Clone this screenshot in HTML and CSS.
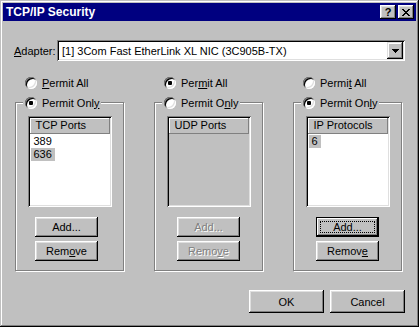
FILE: index.html
```html
<!DOCTYPE html>
<html lang="en">
<head>
    <meta charset="UTF-8">
    <title>TCP/IP Security</title>
    <link rel="stylesheet" href="styles.css">
</head>
<body>

    <!-- Dialog window -->
    <div class="window">
        <div class="titlebar">
            <span class="title">TCP/IP Security</span>
            <div class="title-btns">
                <span class="tbtn">?</span>
                <span class="tbtn">
                    <svg width="8" height="7" viewBox="0 0 8 7" shape-rendering="crispEdges">
                        <path d="M0 0h2v1h-2zM6 0h2v1h-2zM1 1h2v1h-2zM5 1h2v1h-2zM2 2h4v1h-4zM3 3h2v1h-2zM2 4h4v1h-4zM1 5h2v1h-2zM5 5h2v1h-2zM0 6h2v1h-2zM6 6h2v1h-2z" fill="#000"/>
                    </svg>
                </span>
            </div>
        </div>

        <!-- Adapter selector -->
        <div class="adapter-row">
            <span class="adapter-label"><u>A</u>dapter:</span>
            <div class="combo">
                <span class="combo-text">[1] 3Com Fast EtherLink XL NIC (3C905B-TX)</span>
                <span class="combo-btn">
                    <svg width="7" height="4" viewBox="0 0 7 4" shape-rendering="crispEdges">
                        <path d="M0 0h7v1h-7zM1 1h5v1h-5zM2 2h3v1h-3zM3 3h1v1h-1z" fill="#000"/>
                    </svg>
                </span>
            </div>
        </div>

        <!-- Three filter columns -->
        <div class="columns">
            <div class="col">
                <div class="radio-row"><span class="radio"></span><span><u>P</u>ermit All</span></div>
                <fieldset class="group">
                    <legend class="radio-row"><span class="radio checked"></span><span>Permit Onl<u>y</u></span></legend>
                    <div class="group-body">
                        <div class="list">
                            <div class="list-head">TCP Ports</div>
                            <div class="list-items">
                                <div class="list-item"><span>389</span></div>
                                <div class="list-item"><span class="sel">636</span></div>
                            </div>
                        </div>
                        <div class="btns shifted">
                            <span class="btn">Add...</span>
                            <span class="btn">Rem<u>o</u>ve</span>
                        </div>
                    </div>
                </fieldset>
            </div>

            <div class="col">
                <div class="radio-row"><span class="radio checked"></span><span>Per<u>m</u>it All</span></div>
                <fieldset class="group">
                    <legend class="radio-row"><span class="radio"></span><span>Permit O<u>n</u>ly</span></legend>
                    <div class="group-body">
                        <div class="list disabled">
                            <div class="list-head">UDP Ports</div>
                            <div class="list-items"></div>
                        </div>
                        <div class="btns">
                            <span class="btn disabled">Add...</span>
                            <span class="btn disabled">Remo<u>v</u>e</span>
                        </div>
                    </div>
                </fieldset>
            </div>

            <div class="col">
                <div class="radio-row"><span class="radio"></span><span>Permi<u>t</u> All</span></div>
                <fieldset class="group">
                    <legend class="radio-row"><span class="radio checked"></span><span>Permit On<u>l</u>y</span></legend>
                    <div class="group-body">
                        <div class="list">
                            <div class="list-head">IP Protocols</div>
                            <div class="list-items">
                                <div class="list-item"><span class="sel">6</span></div>
                            </div>
                        </div>
                        <div class="btns">
                            <span class="btn focus">Add...</span>
                            <span class="btn">Remov<u>e</u></span>
                        </div>
                    </div>
                </fieldset>
            </div>
        </div>

        <div class="footer">
            <span class="btn wide">OK</span>
            <span class="btn wide">Cancel</span>
        </div>
    </div>

</body>
</html>
```

FILE: styles.css
```css
* {
    box-sizing: border-box;
}

body {
    margin: 0;
    background: #c0c0c0;
    font-family: "Liberation Sans", Arial, sans-serif;
    font-size: 11px;
    color: #000;
}

u {
    text-decoration-thickness: 1px;
    text-underline-offset: 1px;
}

/* window frame */
.window {
    width: 419px;
    height: 327px;
    padding: 3px;
    background: #c0c0c0;
    box-shadow: inset -1px -1px #000, inset 1px 1px #c0c0c0, inset -2px -2px #808080, inset 2px 2px #fff;
    display: flex;
    flex-direction: column;
}

.titlebar {
    height: 18px;
    background: #000080;
    color: #fff;
    display: flex;
    align-items: center;
    justify-content: space-between;
    padding: 0 2px 0 3px;
}

.title {
    font-weight: bold;
    font-size: 12px;
}

.title-btns {
    display: flex;
    gap: 2px;
}

.tbtn {
    width: 16px;
    height: 14px;
    background: #c0c0c0;
    color: #000;
    font-weight: bold;
    font-size: 11px;
    line-height: 14px;
    display: flex;
    align-items: center;
    justify-content: center;
    box-shadow: inset -1px -1px #000, inset 1px 1px #fff, inset -2px -2px #808080, inset 2px 2px #dfdfdf;
}

/* adapter combo */
.adapter-row {
    margin-top: 19px;
    height: 21px;
    padding: 0 11px;
    display: flex;
    align-items: center;
    justify-content: space-between;
}

.combo {
    width: 348px;
    height: 21px;
    background: #fff;
    padding: 2px 2px 2px 5px;
    display: flex;
    align-items: center;
    justify-content: space-between;
    box-shadow: inset 1px 1px #808080, inset -1px -1px #fff, inset 2px 2px #000, inset -2px -2px #dfdfdf;
}

.combo-btn {
    width: 16px;
    height: 17px;
    background: #c0c0c0;
    display: flex;
    align-items: center;
    justify-content: center;
    box-shadow: inset -1px -1px #000, inset 1px 1px #dfdfdf, inset -2px -2px #808080, inset 2px 2px #fff;
}

/* columns */
.columns {
    margin-top: 15px;
    padding-left: 12px;
    display: grid;
    grid-template-columns: 109px 109px 109px;
    column-gap: 30px;
}

.radio-row {
    height: 13px;
    padding-left: 10px;
    display: flex;
    align-items: center;
    gap: 5px;
}

.radio {
    width: 12px;
    height: 12px;
    border-radius: 50%;
    background: #fff;
    display: flex;
    align-items: center;
    justify-content: center;
    box-shadow: inset 1px 1px #808080, inset -1px -1px #fff, inset 2px 2px #000, inset -2px -2px #dfdfdf;
}

.radio.checked::after {
    content: "";
    width: 4px;
    height: 4px;
    border-radius: 1px;
    background: #000;
}

.group {
    width: 109px;
    margin: 7px 0 0;
    padding: 7px 0 9px;
    border: 1px solid #808080;
    box-shadow: inset 1px 1px #fff, 1px 1px #fff;
    min-width: 0;
}

.group legend.radio-row {
    margin-left: 7px;
    padding: 0 2px;
    background: #c0c0c0;
}

.group-body {
    display: flex;
    flex-direction: column;
    align-items: center;
}

/* list boxes */
.list {
    width: 84px;
    height: 91px;
    padding: 2px;
    background: #fff;
    box-shadow: inset 1px 1px #808080, inset -1px -1px #fff, inset 2px 2px #000, inset -2px -2px #dfdfdf;
}

.list.disabled {
    background: #c0c0c0;
}

.list-head {
    height: 16px;
    line-height: 15px;
    padding-left: 6px;
    background: #c0c0c0;
    box-shadow: inset -1px -1px #808080, inset 1px 1px #fff;
}

.list-items {
    padding: 1px 0 0 1px;
}

.list-item {
    height: 13px;
    line-height: 13px;
}

.list-item span {
    display: inline-block;
    padding: 0 3px;
}

.list-item .sel {
    background: #c0c0c0;
}

/* buttons */
.btns {
    margin-top: 10px;
    display: flex;
    flex-direction: column;
    gap: 4px;
}

.btns.shifted {
    margin-right: 6px;
}

.btn {
    position: relative;
    width: 63px;
    height: 20px;
    background: #c0c0c0;
    display: flex;
    align-items: center;
    justify-content: center;
    box-shadow: inset -1px -1px #000, inset 1px 1px #fff, inset -2px -2px #808080, inset 2px 2px #dfdfdf;
}

.btn.disabled {
    color: #808080;
    text-shadow: 1px 1px #fff;
}

.btn.focus {
    box-shadow: inset 0 0 0 1px #000, inset -2px -2px #000, inset 2px 2px #fff, inset -3px -3px #808080;
}

.btn.focus::after {
    content: "";
    position: absolute;
    inset: 4px;
    border: 1px dotted #000;
}

.footer {
    margin-top: 19px;
    padding-right: 11px;
    display: flex;
    justify-content: flex-end;
    gap: 6px;
}

.btn.wide {
    width: 75px;
    height: 23px;
}
```
